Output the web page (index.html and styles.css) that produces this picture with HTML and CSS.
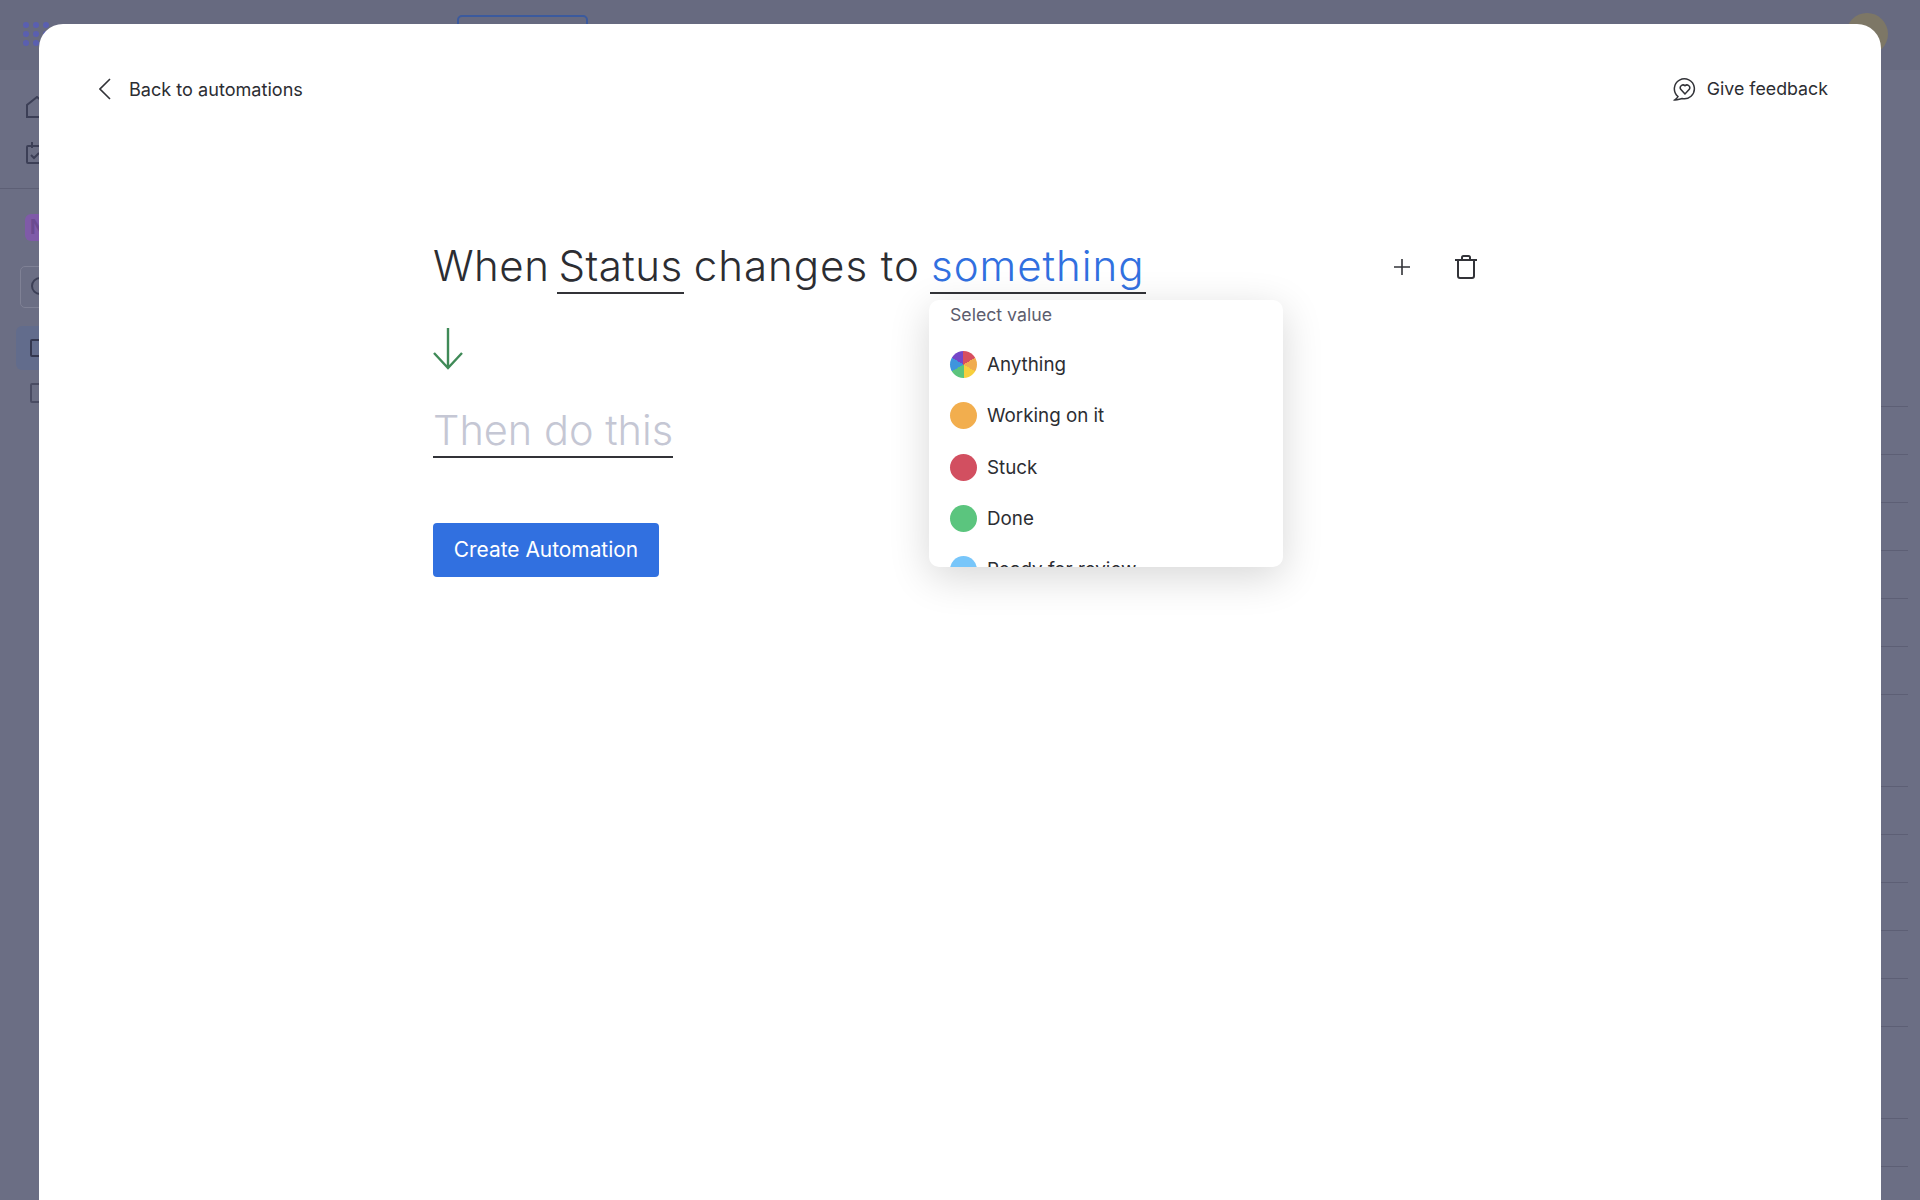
FILE: index.html
```html
<html>
<head>
	<title>Automation builder</title>
	<link rel="stylesheet" href="styles.css">
</head>
<body>
	<div class="app">
		<div class="topbar">
			<svg class="logo" width="90" height="30" viewBox="0 0 90 30">
				<g fill="#5a5fb0">
					<circle cx="4" cy="5" r="3"/><circle cx="14" cy="5" r="3"/><circle cx="24" cy="5" r="3"/>
					<circle cx="4" cy="14" r="3"/><circle cx="14" cy="14" r="3"/><circle cx="24" cy="14" r="3"/>
					<circle cx="4" cy="23" r="3"/><circle cx="14" cy="23" r="3"/><circle cx="24" cy="23" r="3"/>
				</g>
			</svg>
			<div class="upgrade"></div>
			<div class="avatar"></div>
		</div>
		<div class="main">
			<div class="sidebar">
				<svg class="nav-icon" width="40" height="22" viewBox="0 0 40 22" fill="none" stroke="#3c3f56" stroke-width="2">
					<path d="M1 21V9L11 1l10 8v12z"/>
				</svg>
				<svg class="nav-icon" width="40" height="22" viewBox="0 0 40 22" fill="none" stroke="#3c3f56" stroke-width="2">
					<rect x="1" y="4" width="22" height="17" rx="1"/><path d="M6 0v6M5 13l3 3 5-5"/>
				</svg>
				<div class="side-line"></div>
				<div class="badge">N</div>
				<div class="search"><span class="search-ring"></span></div>
				<div class="side-item selected"><span class="board-icon"></span></div>
				<div class="side-item"><span class="board-icon small"></span></div>
			</div>
			<div class="board">
				<div class="row"></div><div class="row"></div><div class="row"></div>
				<div class="row"></div><div class="row"></div><div class="row"></div>
				<div class="row"></div>
				<div class="row first"></div><div class="row"></div><div class="row"></div>
				<div class="row"></div><div class="row"></div><div class="row"></div>
				<div class="row first"></div><div class="row"></div>
			</div>
		</div>
	</div>

	<div class="modal">
		<div class="modal-head">
			<div class="head-link">
				<svg width="14" height="22" viewBox="0 0 14 22" fill="none" stroke="#323338" stroke-width="1.6">
					<path d="M11 1L1 11l10 10"/>
				</svg>
				<span class="back-text">Back to automations</span>
			</div>
			<div class="head-link">
				<svg width="24" height="24" viewBox="0 0 24 24" fill="none" stroke="#323338" stroke-width="1.5">
					<path d="M6 19.500A10 10 0 1 1 10 21.500C8 22 4 23.500 2.500 23 4 22 5.500 21 6 19.500z"/>
					<path d="M13 17l-4.500-5a2.800 2.800 0 0 1 4.500-3.200 2.800 2.800 0 0 1 4.500 3.200z"/>
				</svg>
				<span class="feedback-text">Give feedback</span>
			</div>
		</div>

		<div class="builder">
			<div class="sentence-row">
				<div class="sentence">
					<span class="tight">When</span>
					<span class="slot tight">Status</span>
					<span class="verb">changes to</span>
					<span class="slot blue">something</span>
				</div>
				<div class="actions">
					<svg width="18" height="18" viewBox="0 0 18 18" stroke="#323338" stroke-width="1.6">
						<path d="M9 1v16M1 9h16"/>
					</svg>
					<svg width="24" height="24" viewBox="0 0 24 24" fill="none" stroke="#323338" stroke-width="2">
						<path d="M1 5h22M8 5V2.500Q8 1 9.500 1h5Q16 1 16 2.500V5"/>
						<path d="M4 5v16q0 2 2 2h12q2 0 2-2V5"/>
					</svg>
				</div>
			</div>

			<svg class="arrow" width="30" height="43" viewBox="0 0 30 43" fill="none" stroke="#3f8a57" stroke-width="2.400">
				<path d="M15 1v40M1 26l14 15 14-15"/>
			</svg>

			<div class="then"><span class="slot">Then do this</span></div>

			<div class="create-btn">Create Automation</div>

			<div class="dropdown">
				<div class="drop-title">Select value</div>
				<div class="drop-item"><span class="dot pie"></span>Anything</div>
				<div class="drop-item"><span class="dot orange"></span>Working on it</div>
				<div class="drop-item"><span class="dot red"></span>Stuck</div>
				<div class="drop-item"><span class="dot green"></span>Done</div>
				<div class="drop-item"><span class="dot sky"></span>Ready for review</div>
			</div>
		</div>
	</div>
</body>
</html>
```

FILE: styles.css
```css
body{
	margin:0;
	height:1200px;
	overflow:hidden;
	background-color:#6b6e84;
	font-family:"Inter", "Liberation Sans", sans-serif;
	font-weight:380;
	color:#2c2d32;
}
.app{
	display:flex;
	flex-direction:column;
	height:1200px;
}
.topbar{
	display:flex;
	flex:none;
	height:70px;
	padding:0 32px 0 22px;
	background-color:#676a80;
	box-sizing:border-box;
}
.logo{
	margin-top:20px;
}
.upgrade{
	width:131px;
	height:40px;
	margin:15px 0 0 345px;
	border:2px solid #3b5a9e;
	border-radius:5px;
	box-sizing:border-box;
}
.avatar{
	width:42px;
	height:42px;
	margin:13px 0 0 auto;
	border-radius:50%;
	background-color:#7d7766;
}
.main{
	display:flex;
	flex:1;
	min-height:0;
	overflow:hidden;
}
.sidebar{
	width:300px;
	padding-top:26px;
	box-sizing:border-box;
}
.nav-icon{
	display:block;
	margin:0 0 24px 26px;
}
.side-line{
	height:1px;
	margin-top:8px;
	background-color:#5d5f75;
}
.badge{
	width:60px;
	height:27px;
	margin:25px 0 0 25px;
	padding-left:5px;
	border-radius:6px;
	background-color:#7f5aa8;
	color:#6b4a90;
	font-size:20px;
	font-weight:700;
	line-height:27px;
	box-sizing:border-box;
}
.search{
	height:42px;
	margin:25px 20px 0 20px;
	border:1px solid #7f8195;
	border-radius:5px;
	box-sizing:border-box;
}
.search-ring{
	display:block;
	width:18px;
	height:18px;
	margin:10px 0 0 10px;
	border:2px solid #3c3f56;
	border-radius:50%;
	box-sizing:border-box;
}
.side-item{
	height:44px;
	margin:18px 10px 0 16px;
	padding:13px 0 0 14px;
	border-radius:6px;
	box-sizing:border-box;
}
.side-item.selected{
	background-color:#626c8c;
}
.side-item + .side-item{
	margin-top:0;
}
.board-icon{
	display:block;
	width:20px;
	height:18px;
	border:2px solid #33374f;
	border-radius:2px;
	box-sizing:border-box;
}
.board-icon.small{
	height:20px;
	border-color:#4a4c63;
}
.board{
	flex:1;
	margin-right:12px;
	padding-top:336px;
}
.row{
	height:48px;
	border-top:1px solid #5d5f75;
	box-sizing:border-box;
}
.row.first{
	margin-top:44px;
}

/* modal on top of the board */
.modal{
	position:absolute;
	top:24px;
	left:39px;
	width:1842px;
	height:1176px;
	padding:53px 53px 0 60px;
	background-color:white;
	border-radius:24px 24px 0 0;
	box-sizing:border-box;
}
.modal-head{
	display:flex;
	justify-content:space-between;
	height:24px;
}
.head-link{
	display:flex;
	align-items:center;
	font-size:18.100px;
	line-height:26px;
}
.back-text{
	margin-left:16px;
}
.feedback-text{
	margin-left:11px;
	font-size:17.800px;
}
.builder{
	position:relative;
	margin:139px 0 0 334px;
}
.sentence-row{
	display:flex;
	align-items:flex-start;
}
.sentence{
	display:flex;
	width:960px;
	font-size:42px;
	font-weight:300;
	line-height:52px;
	letter-spacing:1px;
	gap:8px;
}
.tight{
	letter-spacing:0.5px;
}
.verb{
	margin:0 2px;
}
.slot{
	padding:0 1px;
	border-bottom:2px solid #323338;
}
.blue{
	color:#3170e0;
}
.actions{
	display:flex;
	align-items:center;
	gap:43px;
	height:54px;
}
.arrow{
	display:block;
	margin-top:33px;
}
.then{
	display:flex;
	margin-top:34px;
	font-size:41.500px;
	font-weight:300;
	line-height:52px;
	color:#c5c7d4;
}
.then .slot{
	padding:0;
}
.create-btn{
	width:226px;
	height:54px;
	margin-top:65px;
	background-color:#3170e0;
	border-radius:4px;
	color:white;
	font-size:20.900px;
	line-height:54px;
	text-align:center;
}
.dropdown{
	position:absolute;
	top:60px;
	left:496px;
	width:354px;
	height:267px;
	overflow:hidden;
	background-color:white;
	border-radius:10px;
	box-shadow:0 10px 40px rgba(0,0,0,0.16);
}
.drop-title{
	margin-bottom:9px;
	padding-left:21px;
	color:#5c5d6e;
	font-size:17.700px;
	line-height:30px;
}
.drop-item{
	display:flex;
	align-items:center;
	height:51.300px;
	padding-left:21px;
	font-size:18.800px;
}
.dot{
	flex:none;
	width:27px;
	height:27px;
	margin-right:10px;
	border-radius:50%;
}
.pie{
	background:conic-gradient(#d74e5f 0 60deg, #f0ac4f 60deg 120deg, #f7cf3d 120deg 180deg, #5cc47d 180deg 240deg, #3f95dd 240deg 300deg, #7446c8 300deg 360deg);
}
.orange{
	background-color:#f2ae4e;
}
.red{
	background-color:#d24f60;
}
.green{
	background-color:#5bc57e;
}
.sky{
	background-color:#78c6fa;
}
```
